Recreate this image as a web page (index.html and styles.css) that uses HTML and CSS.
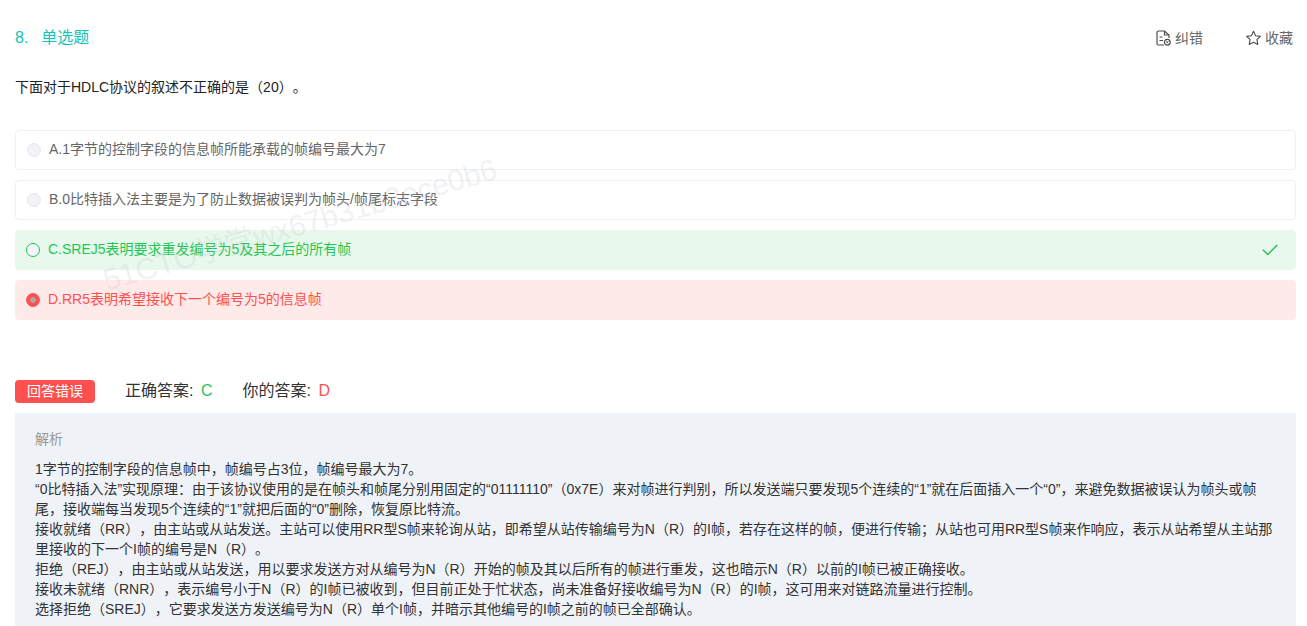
FILE: index.html
```html
<!DOCTYPE html>
<html lang="zh">
<head>
<meta charset="utf-8">
<title>单选题</title>
<link rel="stylesheet" href="styles.css">
</head>
<body>
<main class="page">
  <header class="head">
    <div class="qtype"><span class="qnum">8.</span><span>单选题</span></div>
    <div class="tools">
      <span class="tool">
        <svg class="ico" viewBox="0 0 15 16" fill="none" stroke="#4d4d4d" stroke-width="1.200"><path d="M8 15H2.500A1.500 1.500 0 0 1 1 13.500v-11A1.500 1.500 0 0 1 2.500 1H8.500L13 5v3"/><path d="M8.500 1v4H13"/><path d="M3.500 7H6.500M3.500 10.500H7"/><circle cx="11.300" cy="12.300" r="2.900"/><path d="M10.300 11.300l2 2M12.300 11.300l-2 2" stroke-width="1"/></svg>
        <span>纠错</span>
      </span>
      <span class="tool">
        <svg class="ico" viewBox="0.500 0.600 15 14.500" fill="none" stroke="#4d4d4d" stroke-width="1.100" stroke-linejoin="round"><path d="M8 1.200l2.100 4.400 4.800.6-3.500 3.300.9 4.800L8 12l-4.300 2.300.9-4.800L1.100 6.200l4.800-.6z"/></svg>
        <span>收藏</span>
      </span>
    </div>
  </header>
  <p class="question">下面对于HDLC协议的叙述不正确的是（20）。</p>
  <ul class="options">
    <li class="opt"><i class="radio"></i><span class="otext">A.1字节的控制字段的信息帧所能承载的帧编号最大为7</span></li>
    <li class="opt"><i class="radio"></i><span class="otext">B.0比特插入法主要是为了防止数据被误判为帧头/帧尾标志字段</span></li>
    <li class="opt right"><i class="radio"></i><span class="otext">C.SREJ5表明要求重发编号为5及其之后的所有帧</span>
      <svg class="check" viewBox="0 0 16 12" fill="none" stroke="#1fc754" stroke-width="1.500"><path d="M.8 5.800l5 4.700L15.200 1"/></svg>
    </li>
    <li class="opt wrong"><i class="radio"></i><span class="otext">D.RR5表明希望接收下一个编号为5的信息帧</span></li>
  </ul>
  <div class="result">
    <span class="badge">回答错误</span>
    <span class="ans">正确答案: <b class="ok">C</b></span>
    <span class="ans">你的答案: <b class="bad">D</b></span>
  </div>
  <section class="analysis">
    <h2 class="atitle">解析</h2>
    <p>1字节的控制字段的信息帧中，帧编号占3位，帧编号最大为7。</p>
    <p>“0比特插入法”实现原理：由于该协议使用的是在帧头和帧尾分别用固定的“01111110”（0x7E）来对帧进行判别，所以发送端只要发现5个连续的“1”就在后面插入一个“0”，来避免数据被误认为帧头或帧尾，接收端每当发现5个连续的“1”就把后面的“0”删除，恢复原比特流。</p>
    <p>接收就绪（RR），由主站或从站发送。主站可以使用RR型S帧来轮询从站，即希望从站传输编号为N（R）的I帧，若存在这样的帧，便进行传输；从站也可用RR型S帧来作响应，表示从站希望从主站那里接收的下一个I帧的编号是N（R）。</p>
    <p>拒绝（REJ），由主站或从站发送，用以要求发送方对从编号为N（R）开始的帧及其以后所有的帧进行重发，这也暗示N（R）以前的I帧已被正确接收。</p>
    <p>接收未就绪（RNR），表示编号小于N（R）的I帧已被收到，但目前正处于忙状态，尚未准备好接收编号为N（R）的I帧，这可用来对链路流量进行控制。</p>
    <p>选择拒绝（SREJ），它要求发送方发送编号为N（R）单个I帧，并暗示其他编号的I帧之前的帧已全部确认。</p>
  </section>
</main>
<div class="mark">51CTO学堂wx67b31b3ece0b6</div>
</body>
</html>
```
FILE: styles.css
```css
* { box-sizing: border-box; }
html, body { margin: 0; height: 626px; overflow: hidden; }
body { background: #fff; font-family: "Liberation Sans", "Noto Sans CJK SC", sans-serif; font-size: 14px; color: #333; position: relative; text-spacing-trim: space-all; }
.page { padding: 0 11px 0 15px; }
.head { height: 75px; display: flex; justify-content: space-between; align-items: center; }
.qtype { color: #14c4b8; font-size: 16px; display: flex; align-items: baseline; gap: 13px; padding-bottom: 4px; }
.tools { display: flex; gap: 43px; color: #666; font-size: 14px; padding-right: 3px; }
.tool { display: flex; align-items: center; gap: 4px; }
.tool span { padding-bottom: 1px; }
.ico { width: 15px; height: 16px; }
.question { margin: 0; height: 55px; line-height: 24px; color: #222; font-size: 14px; }
.options { list-style: none; margin: 0; padding: 0; display: flex; flex-direction: column; gap: 10px; }
.opt { height: 40px; border: 1px solid #eef0f6; border-radius: 4px; display: flex; align-items: center; padding-left: 11px; color: #666; font-size: 14px; gap: 8px; }
.otext { padding-bottom: 5px; }
.radio { width: 14px; height: 14px; border-radius: 50%; background: #f1f3f9; border: 1px solid #e6e8f0; flex: none; }
.right { background: #e8f8ec; border-color: #e8f8ec; color: #1fc754; padding-left: 10px; }
.right .radio { background: #f4f6fb; border-color: #1fc754; }
.wrong { background: #ffeaea; border-color: #ffeaea; color: #ff5050; padding-left: 10px; }
.wrong .radio { background: radial-gradient(circle, #a9a9ae 0 2.500px, #ff5050 3px); border-color: #ff5050; }
.check { width: 16px; height: 12px; margin-left: auto; margin-right: 17px; }
.result { margin-top: 60px; height: 23px; display: flex; align-items: center; gap: 30px; font-size: 16px; color: #333; }
.badge { background: #ff5050; color: #fff; font-size: 14px; width: 80px; height: 23px; line-height: 23px; text-align: center; border-radius: 4px; }
.ans { padding-bottom: 5px; }
.ok, .bad { font-weight: normal; margin-left: 3px; }
.ok { color: #1fc754; }
.bad { color: #ff5050; }
.analysis { margin-top: 10px; background: #eff2f7; padding: 15px 20px 0; height: 213px; font-size: 14px; line-height: 20px; color: #333; }
.atitle { margin: 0 0 9px; font-weight: normal; font-size: 14px; line-height: 22px; color: #999; }
.analysis p { margin: 0; }
.mark { position: absolute; left: 96px; top: 207px; width: max-content; color: rgba(190,195,210,.22); font-size: 30px; line-height: 36px; transform: rotate(-16deg); white-space: nowrap; pointer-events: none; }
```
